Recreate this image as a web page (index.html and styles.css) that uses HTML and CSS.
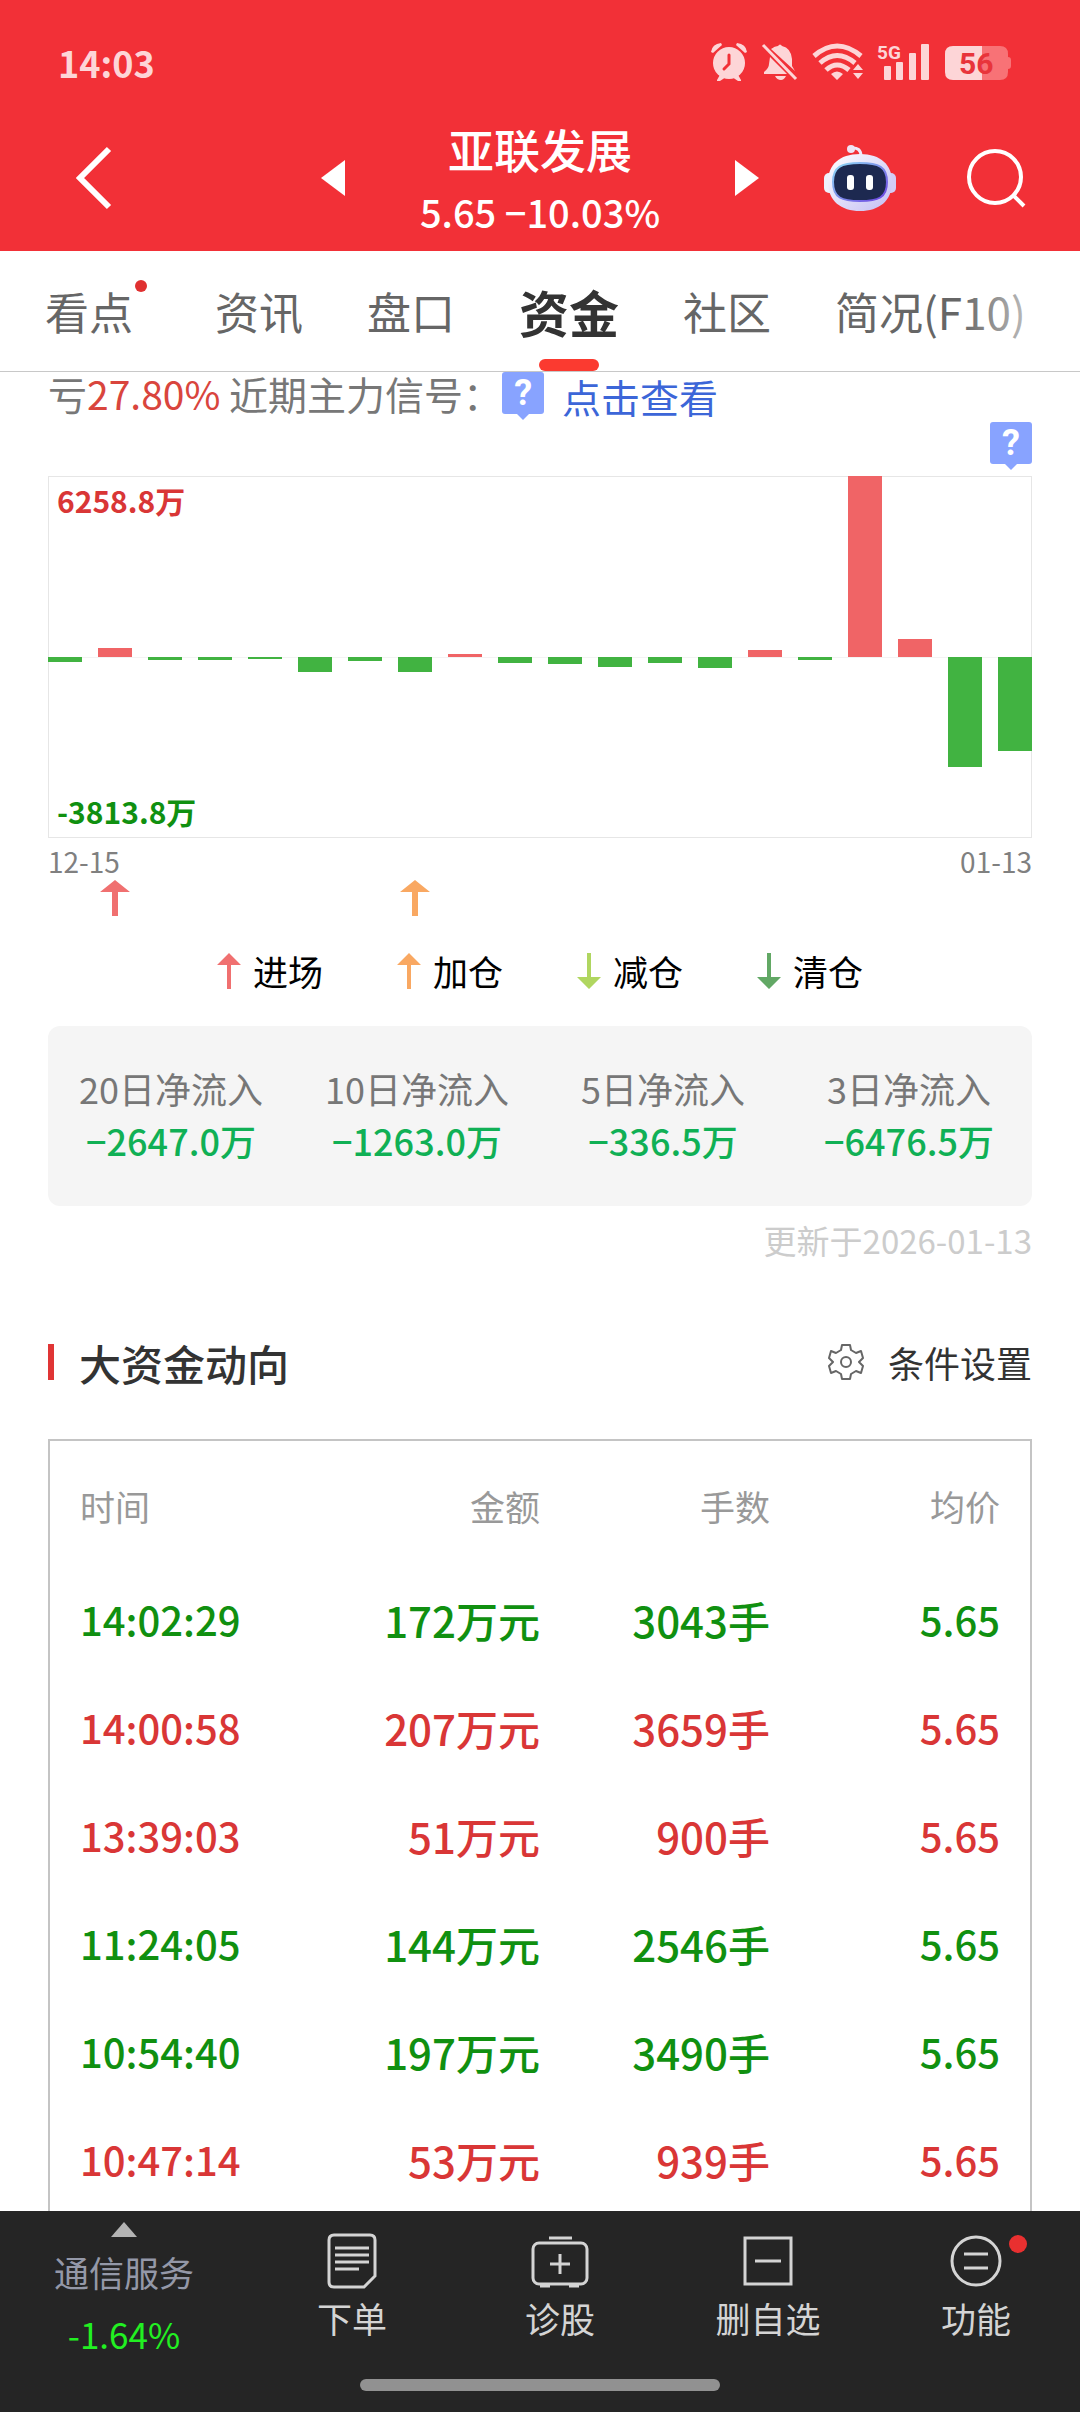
FILE: index.html
```
<!DOCTYPE html>
<html lang="zh-CN">
<head>
    <meta charset="UTF-8">
    <meta name="viewport" content="width=device-width, initial-scale=1">
    <title>亚联发展</title>
    <link rel="stylesheet" href="styles.css">
</head>
<body>
    <header class="header">
        <div class="status">
            <span class="clock">14:03</span>
            <svg class="status-icons" width="302" height="40" viewBox="0 0 302 40" fill="#fdd5d7">
                <!-- alarm -->
                <circle cx="19" cy="21" r="16"/>
                <path d="M1 10Q2 2 11 1L12 3L3 11ZM37 10Q36 2 27 1L26 3L35 11ZM7 38L11 31L16 35L10 39H7ZM31 38L27 31L22 35L28 39H31Z"/>
                <path d="M19 13V22L14 27" fill="none" stroke="#f23037" stroke-width="3" stroke-linecap="round"/>
                <!-- bell off -->
                <path d="M61 7Q65 4 68 4Q70 1 72 4Q81 6 82 17V24L85 29ZM60 15L77 32H54V30Q59 26 59 22ZM65 34H76Q74 38 71 38Q67 38 65 34Z"/>
                <path d="M53 3L86 37" fill="none" stroke="#fdd5d7" stroke-width="3"/>
                <!-- wifi -->
                <g fill="none" stroke="#fdd5d7" stroke-width="5">
                    <path d="M104 14Q127 -6 151 14"/>
                    <path d="M110 21Q127 6 145 21"/>
                    <path d="M116 28Q127 18 139 28"/>
                </g>
                <path d="M121 32Q127 27 133 32L127 38ZM143 28L148 22L153 28ZM143 31L148 37L153 31Z"/>
                <!-- signal -->
                <text x="167" y="17" class="net">5G</text>
                <rect x="174" y="24" width="7" height="14" rx="1"/>
                <rect x="186" y="20" width="7" height="18" rx="1"/>
                <rect x="199" y="11" width="7" height="27" rx="1"/>
                <rect x="211" y="2" width="8" height="36" rx="1"/>
                <!-- battery -->
                <path d="M272 4H290Q298 4 298 12V15Q301 15 301 18V24Q301 27 298 27V30Q298 38 290 38H272Z" fill="#f87276"/>
                <path d="M272 4H243Q235 4 235 12V30Q235 38 243 38H272Z"/>
                <text x="249" y="32" class="level">56</text>
            </svg>
        </div>
        <div class="nav">
            <button class="icon-btn back" aria-label="返回">
                <svg width="36" height="64" viewBox="0 0 36 64"><path d="M33 3L4 32L33 61" fill="none" stroke="#fff" stroke-width="6"/></svg>
            </button>
            <div class="stock">
                <button class="icon-btn" aria-label="上一只">
                    <svg width="24" height="36" viewBox="0 0 24 36"><path d="M24 0V36L0 18Z" fill="#fff"/></svg>
                </button>
                <div class="stock-title">
                    <h1>亚联发展</h1>
                    <p>5.65 −10.03%</p>
                </div>
                <button class="icon-btn" aria-label="下一只">
                    <svg width="24" height="36" viewBox="0 0 24 36"><path d="M0 0V36L24 18Z" fill="#fff"/></svg>
                </button>
            </div>
            <div class="nav-right">
                <button class="icon-btn" aria-label="智能助手">
                    <svg width="72" height="68" viewBox="0 0 72 68">
                        <defs>
                            <linearGradient id="shell" x1="0" y1="0" x2="1" y2="1">
                                <stop offset="0" stop-color="#fff"/>
                                <stop offset="1" stop-color="#c3bdf3"/>
                            </linearGradient>
                            <linearGradient id="rim" x1="0" y1="0" x2="1" y2="1">
                                <stop offset="0" stop-color="#8fdcf5"/>
                                <stop offset="1" stop-color="#6b3fe0"/>
                            </linearGradient>
                        </defs>
                        <path d="M27 4Q37 3 37 12" fill="none" stroke="#efe9fb" stroke-width="3"/>
                        <circle cx="27" cy="5" r="4" fill="#efe3f5"/>
                        <rect x="0" y="29" width="12" height="20" rx="5" fill="#eef1fd"/>
                        <rect x="60" y="29" width="12" height="20" rx="5" fill="#d3cdf6"/>
                        <path d="M36 10C57 10 68 21 68 38C68 57 55 67 36 67C17 67 4 57 4 38C4 21 15 10 36 10Z" fill="url(#shell)"/>
                        <path d="M36 19C55 19 63 23 63 38C63 54 54 57 36 57C18 57 9 54 9 38C9 23 17 19 36 19Z" fill="#1d2950" stroke="url(#rim)" stroke-width="2"/>
                        <rect x="23" y="31" width="7" height="15" rx="3" fill="#fff"/>
                        <rect x="42" y="31" width="7" height="15" rx="3" fill="#fff"/>
                    </svg>
                </button>
                <button class="icon-btn" aria-label="搜索">
                    <svg width="60" height="60" viewBox="0 0 60 60" fill="none" stroke="#fff" stroke-width="4"><circle cx="29" cy="29" r="26"/><path d="M47 47L58 58"/></svg>
                </button>
            </div>
        </div>
    </header>

    <nav class="tabs">
        <a href="#" class="has-dot">看点</a>
        <a href="#">资讯</a>
        <a href="#">盘口</a>
        <a href="#" class="active">资金</a>
        <a href="#">社区</a>
        <a href="#">简况(F10)</a>
    </nav>

    <main class="content">
        <div class="signal">
            <span>亏<em>27.80%</em> 近期主力信号：</span>
            <button class="help">?</button>
            <a href="#">点击查看</a>
        </div>
        <div class="help-row"><button class="help">?</button></div>

        <div class="chart">
            <span class="max">6258.8万</span>
            <span class="min">-3813.8万</span>
            <div class="bars">
                <div class="down"><i style="height: 5px"></i></div>
                <div class="up"><i style="height: 9px"></i></div>
                <div class="down"><i style="height: 3px"></i></div>
                <div class="down"><i style="height: 3px"></i></div>
                <div class="down"><i style="height: 2px"></i></div>
                <div class="down"><i style="height: 15px"></i></div>
                <div class="down"><i style="height: 4px"></i></div>
                <div class="down"><i style="height: 15px"></i></div>
                <div class="up"><i style="height: 3px"></i></div>
                <div class="down"><i style="height: 6px"></i></div>
                <div class="down"><i style="height: 7px"></i></div>
                <div class="down"><i style="height: 10px"></i></div>
                <div class="down"><i style="height: 6px"></i></div>
                <div class="down"><i style="height: 11px"></i></div>
                <div class="up"><i style="height: 7px"></i></div>
                <div class="down"><i style="height: 3px"></i></div>
                <div class="up"><i style="height: 181px"></i></div>
                <div class="up"><i style="height: 18px"></i></div>
                <div class="down"><i style="height: 110px"></i></div>
                <div class="down"><i style="height: 94px"></i></div>
            </div>
        </div>
        <div class="dates"><span>12-15</span><span>01-13</span></div>
        <div class="markers">
            <svg class="m-enter" width="30" height="36" viewBox="0 0 30 36" fill="#f07070"><path d="M15 0L30 12H18V36H12V12H0Z"/></svg>
            <svg class="m-add" width="30" height="36" viewBox="0 0 30 36" fill="#f9a862"><path d="M15 0L30 12H18V36H12V12H0Z"/></svg>
        </div>

        <div class="legend">
            <span><svg width="24" height="36" viewBox="0 0 24 36" fill="#f07070"><path d="M12 0L24 12H14V36H10V12H0Z"/></svg>进场</span>
            <span><svg width="24" height="36" viewBox="0 0 24 36" fill="#f9a862"><path d="M12 0L24 12H14V36H10V12H0Z"/></svg>加仓</span>
            <span><svg width="24" height="36" viewBox="0 0 24 36" fill="#b0d660"><path d="M12 36L24 24H14V0H10V24H0Z"/></svg>减仓</span>
            <span><svg width="24" height="36" viewBox="0 0 24 36" fill="#62a865"><path d="M12 36L24 24H14V0H10V24H0Z"/></svg>清仓</span>
        </div>

        <dl class="summary">
            <div><dt>20日净流入</dt><dd>−2647.0万</dd></div>
            <div><dt>10日净流入</dt><dd>−1263.0万</dd></div>
            <div><dt>5日净流入</dt><dd>−336.5万</dd></div>
            <div><dt>3日净流入</dt><dd>−6476.5万</dd></div>
        </dl>
        <p class="updated">更新于2026-01-13</p>

        <div class="section-head">
            <h2>大资金动向</h2>
            <button class="settings">
                <svg width="36" height="36" viewBox="0 0 36 36" fill="none" stroke="#666" stroke-width="2" stroke-linejoin="round">
                    <path d="M14 1H22L23 6L28 9L33 7L35 14L31 18L35 22L33 29L28 27L23 30L22 35H14L13 30L8 27L3 29L1 22L5 18L1 14L3 7L8 9L13 6Z"/>
                    <circle cx="18" cy="18" r="5"/>
                </svg>
                条件设置
            </button>
        </div>

        <div class="deals">
            <table>
                <thead>
                    <tr><th>时间</th><th>金额</th><th>手数</th><th>均价</th></tr>
                </thead>
                <tbody>
                    <tr class="sell"><td>14:02:29</td><td>172万元</td><td>3043手</td><td>5.65</td></tr>
                    <tr class="buy"><td>14:00:58</td><td>207万元</td><td>3659手</td><td>5.65</td></tr>
                    <tr class="buy"><td>13:39:03</td><td>51万元</td><td>900手</td><td>5.65</td></tr>
                    <tr class="sell"><td>11:24:05</td><td>144万元</td><td>2546手</td><td>5.65</td></tr>
                    <tr class="sell"><td>10:54:40</td><td>197万元</td><td>3490手</td><td>5.65</td></tr>
                    <tr class="buy"><td>10:47:14</td><td>53万元</td><td>939手</td><td>5.65</td></tr>
                </tbody>
            </table>
        </div>
    </main>

    <footer class="footer">
        <div class="toolbar">
            <button class="sector">
                <svg width="26" height="15" viewBox="0 0 26 15"><path d="M13 0L26 15H0Z" fill="#b3b3b3"/></svg>
                <span>通信服务</span>
                <b>-1.64%</b>
            </button>
            <button>
                <svg width="58" height="56" viewBox="0 0 58 56" fill="none" stroke="#d4d4d4" stroke-width="3">
                    <path d="M11 2H47Q52 2 52 7V43L41 54H11Q6 54 6 49V7Q6 2 11 2Z"/>
                    <path d="M12 15H46M12 22H46M12 29H46M12 36H36"/>
                </svg>
                下单
            </button>
            <button>
                <svg width="58" height="56" viewBox="0 0 58 56" fill="none" stroke="#d4d4d4" stroke-width="3">
                    <rect x="2" y="10" width="54" height="41" rx="6"/>
                    <path d="M18 5H41M29 21V41M19 31H39M9 53H19M38 53H48"/>
                </svg>
                诊股
            </button>
            <button>
                <svg width="58" height="56" viewBox="0 0 58 56" fill="none" stroke="#d4d4d4" stroke-width="3">
                    <rect x="6" y="5" width="46" height="46"/>
                    <path d="M16 28H42"/>
                </svg>
                删自选
            </button>
            <button class="more">
                <svg width="58" height="56" viewBox="0 0 58 56" fill="none" stroke="#d4d4d4" stroke-width="3">
                    <circle cx="29" cy="28" r="24"/>
                    <path d="M17 21H41M17 35H41"/>
                </svg>
                功能
            </button>
        </div>
        <div class="home-bar"></div>
    </footer>
</body>
</html>
```

FILE: styles.css
```
* {
    box-sizing: border-box;
    margin: 0;
    padding: 0;
}

body {
    display: flex;
    flex-direction: column;
    height: 100vh;
    overflow: hidden;
    background: #fff;
    color: #333;
    font-family: "Noto Sans CJK SC", sans-serif;
    font-size: 36px;
}

button {
    border: none;
    background: none;
    color: inherit;
    font: inherit;
    cursor: pointer;
}

a {
    color: inherit;
    text-decoration: none;
}

svg {
    display: block;
    flex: none;
}

/* header */
.header {
    flex: none;
    background: #f23037;
    color: #fff;
}

.status {
    display: flex;
    justify-content: space-between;
    align-items: center;
    padding: 36px 68px 18px 58px;
    height: 105px;
}

.clock {
    color: #fdd5d7;
    font-weight: bold;
    line-height: 48px;
}

.net {
    font: bold 19px "Roboto", sans-serif;
}

.level {
    font: bold 30px "Roboto", sans-serif;
    fill: #e8343b;
}

.nav {
    display: grid;
    grid-template-columns: 1fr auto 1fr;
    align-items: center;
    height: 146px;
}

.back {
    justify-self: start;
    margin-left: 76px;
}

.stock {
    display: flex;
    align-items: center;
    gap: 75px;
}

.stock-title {
    padding-top: 4px;
    text-align: center;
    font-weight: 500;
}

.stock-title h1 {
    font-size: 46px;
    font-weight: 500;
    line-height: 64px;
}

.stock-title p {
    font-size: 38px;
    line-height: 64px;
}

.nav-right {
    display: flex;
    justify-content: flex-end;
    align-items: center;
    gap: 70px;
    padding-right: 54px;
}

/* tabs */
.tabs {
    position: relative;
    flex: none;
    display: flex;
    gap: 64px;
    height: 121px;
    padding-left: 45px;
    border-bottom: 1px solid #c8c8c8;
    color: #666;
    font-size: 44px;
    line-height: 120px;
    white-space: nowrap;
    overflow: hidden;
}

/* fades out the tabs that run off the right edge */
.tabs::after {
    content: "";
    position: absolute;
    top: 0;
    right: 0;
    width: 120px;
    height: 100%;
    background: linear-gradient(to right, rgba(255, 255, 255, 0), #fff);
}

.tabs a {
    position: relative;
}

.tabs .has-dot {
    padding-right: 18px;
}

.has-dot::after {
    content: "";
    position: absolute;
    top: 29px;
    right: 4px;
    width: 12px;
    height: 12px;
    border-radius: 50%;
    background: #e03030;
}

.tabs .active {
    color: #333;
    font-size: 50px;
    font-weight: bold;
}

.active::after {
    content: "";
    position: absolute;
    left: 50%;
    bottom: 0;
    width: 60px;
    height: 12px;
    margin-left: -30px;
    border-radius: 6px;
    background: #fb3a30;
}

/* content */
.content {
    flex: 1;
    min-height: 0;
    overflow-y: auto;
    scrollbar-width: none;
    margin-top: -12px;
    padding: 12px 48px 0;
}

.signal {
    display: flex;
    align-items: flex-start;
    height: 50px;
    color: #777;
    font-size: 39px;
    line-height: 42px;
    white-space: nowrap;
}

.signal em {
    color: #d9453d;
    font-style: normal;
}

.signal a {
    margin-left: 18px;
    color: #3c66d8;
    line-height: 48px;
}

.help {
    position: relative;
    width: 42px;
    height: 42px;
    border-radius: 3px;
    background: #88a3ff;
    color: #fff;
    font: bold 36px/42px "Roboto", sans-serif;
}

.help::after {
    content: "";
    position: absolute;
    left: 15px;
    top: 42px;
    border: 6px solid transparent;
    border-top-color: #88a3ff;
    border-bottom: none;
}

.help-row {
    display: flex;
    justify-content: flex-end;
    height: 54px;
}

.chart {
    position: relative;
    height: 362px;
    border: 1px solid #e6e6e6;
    font-size: 30px;
    font-weight: bold;
    line-height: 36px;
    background: linear-gradient(#f3f3f3, #f3f3f3) center / 100% 1px no-repeat;
}

.chart span {
    position: absolute;
    left: 8px;
}

.chart .max {
    top: 5px;
    color: #d93636;
}

.chart .min {
    bottom: 8px;
    color: #109010;
}

.bars,
.markers {
    display: grid;
    grid-template-columns: repeat(20, 34px);
    justify-content: space-between;
}

.bars {
    height: 362px;
    margin: -1px;
}

.bars div {
    display: grid;
    grid-template-rows: 1fr 1fr;
}

.up i {
    grid-row: 1;
    align-self: end;
    background: #f06466;
}

.down i {
    grid-row: 2;
    background: #41b341;
}

.dates {
    display: flex;
    justify-content: space-between;
    padding-top: 4px;
    color: #808080;
    font-size: 28px;
    line-height: 38px;
}

.markers {
    justify-items: center;
    height: 36px;
}

.m-enter {
    grid-column: 2;
}

.m-add {
    grid-column: 8;
}

.legend {
    display: flex;
    justify-content: center;
    gap: 74px;
    margin-top: 37px;
    color: #000;
    font-size: 35px;
    line-height: 36px;
}

.legend span {
    display: flex;
    gap: 12px;
}

.summary {
    display: grid;
    grid-template-columns: repeat(4, 1fr);
    margin-top: 37px;
    padding: 36px 0 40px;
    border-radius: 12px;
    background: #f5f5f5;
    text-align: center;
    line-height: 52px;
}

.summary dt {
    color: #777;
}

.summary dd {
    color: #10b055;
    font-weight: 500;
}

.updated {
    margin-top: 10px;
    color: #ccc;
    font-size: 33px;
    line-height: 48px;
    text-align: right;
}

.section-head {
    display: flex;
    justify-content: space-between;
    align-items: center;
    height: 60px;
    margin-top: 68px;
}

.section-head h2 {
    display: flex;
    align-items: center;
    gap: 25px;
    font-size: 42px;
    font-weight: 500;
}

.section-head h2::before {
    content: "";
    width: 6px;
    height: 36px;
    background: #e03535;
}

.settings {
    display: flex;
    align-items: center;
    gap: 24px;
}

/* big orders */
.deals {
    margin-top: 47px;
    padding: 0 30px 30px;
    border: 2px solid #c4c4c4;
}

.deals table {
    width: 100%;
    table-layout: fixed;
    border-collapse: collapse;
    text-align: right;
}

.deals th {
    height: 127px;
    padding-top: 2px;
    color: #999;
    font-size: 35px;
    font-weight: normal;
}

.deals td {
    height: 108px;
    padding-bottom: 6px;
    font-size: 42px;
    font-weight: 500;
}

.deals th:first-child,
.deals td:first-child {
    text-align: left;
}

.deals td:first-child,
.deals td:last-child {
    font-size: 40px;
}

.buy {
    color: #d93636;
}

.sell {
    color: #109010;
}

/* footer */
.footer {
    flex: none;
    background: #252525;
    color: #d4d4d4;
    padding-bottom: 21px;
}

.toolbar {
    display: grid;
    grid-template-columns: 248px repeat(4, 1fr);
    height: 168px;
}

.toolbar button {
    position: relative;
    display: flex;
    flex-direction: column;
    align-items: center;
    padding-top: 22px;
    font-size: 35px;
    line-height: 58px;
}

.toolbar .sector {
    padding: 11px 0 0;
}

.sector span {
    margin: 6px 0 4px;
    color: #9498a8;
}

.sector b {
    color: #22f022;
    font-weight: normal;
}

.more::after {
    content: "";
    position: absolute;
    top: 24px;
    left: 50%;
    width: 18px;
    height: 18px;
    margin-left: 33px;
    border-radius: 50%;
    background: #e93030;
}

.home-bar {
    width: 360px;
    height: 12px;
    margin: 0 auto;
    border-radius: 6px;
    background: #919191;
}
```
